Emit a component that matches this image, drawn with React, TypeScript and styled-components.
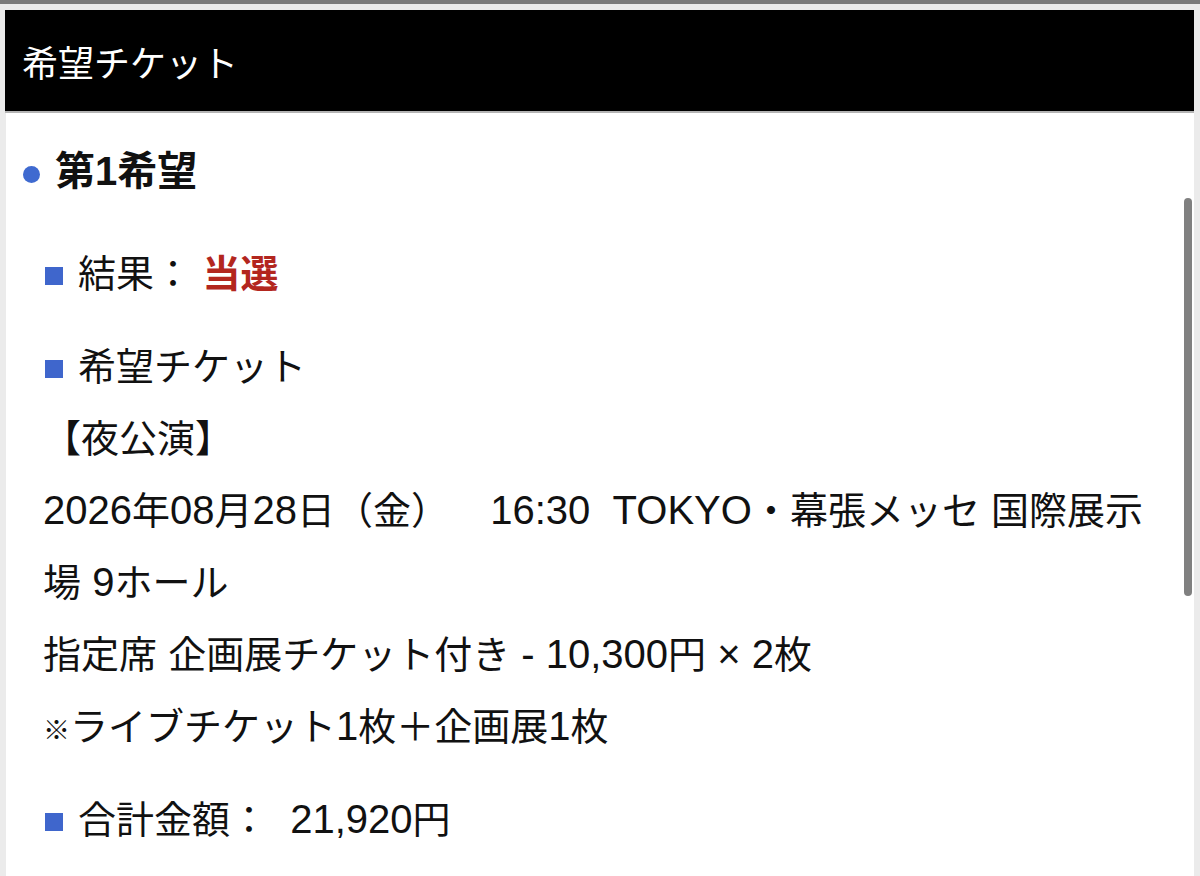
import React from "react";
import styled, { createGlobalStyle } from "styled-components";

const Global = createGlobalStyle`
  html, body { margin: 0; padding: 0; }
  body {
    background: #ebebeb;
    font-family: "Liberation Sans", "Noto Sans CJK JP", sans-serif;
    color: #111;
    overflow: hidden;
  }
`;

const TopStrip = styled.div`
  height: 4px;
  background: #7a7a7a;
`;

const Frame = styled.div`
  padding: 6px 6px 0 5px;
  height: 872px;
  box-sizing: border-box;
  display: flex;
  flex-direction: column;
`;

const Header = styled.header`
  height: 101px;
  background: #000;
  border-bottom: 2px solid #b4b4b4;
  display: flex;
  align-items: center;
  padding-left: 17px;
  color: #fff;
  font-size: 36px;
`;

const Body = styled.main`
  position: relative;
  flex: 1;
  background: #fff;
  margin-left: 1px;
  padding: 22px 34px 0 37px;
  overflow: hidden;
`;

const Scrollbar = styled.div`
  position: absolute;
  right: 2px;
  top: 85px;
  width: 8px;
  height: 398px;
  border-radius: 4px;
  background: #808080;
`;

const Title = styled.h2`
  margin: 0 0 31px -20px;
  display: flex;
  align-items: center;
  gap: 15px;
  font-size: 40px;
  line-height: 72px;
  font-weight: 700;
`;

const Dot = styled.span`
  width: 17px;
  height: 17px;
  border-radius: 50%;
  background: #3f6ad0;
  margin-top: 6px;
  flex: none;
`;

const Section = styled.section`
  & + & {
    margin-top: 21px;
  }
`;

const Heading = styled.div`
  display: flex;
  align-items: center;
  gap: 15px;
  padding-left: 2px;
  font-size: 38px;
  line-height: 72px;
  white-space: pre-wrap;
`;

const Square = styled.span`
  width: 18px;
  height: 18px;
  background: #3f66cc;
  margin-top: 4px;
  flex: none;
`;

const Win = styled.strong`
  color: #b3261e;
  font-weight: 700;
`;

const Line = styled.div`
  font-size: 38px;
  line-height: 72px;
  white-space: pre-wrap;
`;

const Lat = styled.span`
  font-size: 40px;
  line-height: 1;
`;

const Mark = styled.span`
  font-size: 27px;
  line-height: 1;
`;

export default function App() {
  return (
    <>
      <Global />
      <TopStrip />
      <Frame>
        <Header>希望チケット</Header>
        <Body>
          <Scrollbar />
          <Title>
            <Dot />
            第1希望
          </Title>
          <Section>
            <Heading>
              <Square />
              <span>
                結果： <Win>当選</Win>
              </span>
            </Heading>
          </Section>
          <Section>
            <Heading>
              <Square />
              <span>希望チケット</span>
            </Heading>
            <Line>{"【夜公演】"}</Line>
            <Line>
              <Lat>2026</Lat>年<Lat>08</Lat>月<Lat>28</Lat>日（金）　<Lat>{"  16:30  TOKYO"}</Lat>
              ・幕張メッセ<Lat> </Lat>国際展示場<Lat> 9</Lat>ホール
            </Line>
            <Line>
              指定席<Lat> </Lat>企画展チケット付き<Lat>{" - 10,300"}</Lat>円<Lat>{" × 2"}</Lat>枚
            </Line>
            <Line>
              <Mark>※</Mark>ライブチケット<Lat>1</Lat>枚＋企画展<Lat>1</Lat>枚
            </Line>
          </Section>
          <Section>
            <Heading>
              <Square />
              <span>
                合計金額：<Lat>{"  21,920"}</Lat>円
              </span>
            </Heading>
          </Section>
        </Body>
      </Frame>
    </>
  );
}
